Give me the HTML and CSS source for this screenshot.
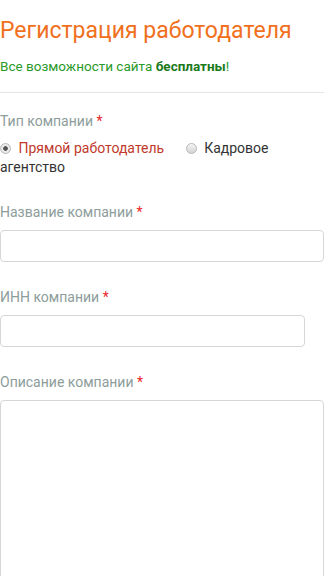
FILE: index.html
```html
<!DOCTYPE html>
<html lang="ru">

<head>
    <meta charset="UTF-8">
    <meta name="viewport" content="width=device-width, initial-scale=1.0">
    <title>Регистрация работодателя</title>
    <link rel="stylesheet" href="styles.css">
</head>

<body>
    <div class="page">
        <h1>Регистрация работодателя</h1>
        <p class="free">Все возможности сайта <b>бесплатны</b>!</p>
        <hr>
        <form>
            <div class="field">
                <span class="form-label">Тип компании <span class="req">*</span></span>
                <div class="radios">
                    <label class="radio checked"><input type="radio" name="type" checked> Прямой работодатель</label>
                    <label class="radio"><input type="radio" name="type"> Кадровое агентство</label>
                </div>
            </div>
            <div class="field">
                <label for="name" class="form-label">Название компании <span class="req">*</span></label>
                <input type="text" id="name" class="wide">
            </div>
            <div class="field">
                <label for="inn" class="form-label">ИНН компании <span class="req">*</span></label>
                <input type="text" id="inn" class="short">
            </div>
            <div class="field">
                <label for="descr" class="form-label">Описание компании <span class="req">*</span></label>
                <textarea id="descr" rows="10"></textarea>
            </div>
        </form>
    </div>
</body>

</html>
```

FILE: styles.css
```css
:root {
    --orange: #f07020;
    --green: #2a9a2a;
    --label: #8d9d9b;
    --red: #e8262b;
    --border: #d6d6d6;
}

body {
    margin: 0;
    font-family: Roboto, 'Noto Sans', sans-serif;
    background: white;
    color: #333;
}

.page {
    padding-top: 16px;
}

h1 {
    margin: 0;
    font-weight: normal;
    font-size: 23px;
    line-height: 30px;
    color: var(--orange);
}

.free {
    margin: 11px 0 0;
    font-size: 13.5px;
    line-height: 18px;
    color: var(--green);
}

.free b {
    color: #1b7a1b;
}

hr {
    border: none;
    border-top: 1px solid #e6e6e6;
    margin: 17px 0 0;
}

.field {
    margin-top: 25px;
}

.field:first-child {
    margin-top: 18px;
}

.form-label {
    display: block;
    font-size: 14px;
    line-height: 20px;
    color: var(--label);
    margin-bottom: 8px;
}

.req {
    color: var(--red);
}

.radios {
    font-size: 14px;
    line-height: 19px;
    color: #333;
}

.radio {
    margin-right: 18px;
}

.radio.checked {
    color: #c0392b;
}

.radio input {
    -webkit-appearance: none;
    appearance: none;
    box-sizing: border-box;
    width: 11px;
    height: 11px;
    margin: 0 4px 0 0;
    border: 1px solid #b8b8b8;
    border-radius: 50%;
    background: linear-gradient(#f4f4f4, #d4d4d4);
    vertical-align: -1px;
}

.radio input:checked {
    background: radial-gradient(circle, #555 0, #555 2px, #eee 2.6px, #e0e0e0 100%);
}

input[type="text"],
textarea {
    display: block;
    box-sizing: border-box;
    height: 32px;
    border: 1px solid var(--border);
    border-radius: 4px;
    margin: 0;
    padding: 6px;
    font-size: 14px;
}

.wide {
    width: 324px;
}

.short {
    width: 305px;
}

textarea {
    width: 324px;
    height: 200px !important;
    resize: vertical;
}
```
